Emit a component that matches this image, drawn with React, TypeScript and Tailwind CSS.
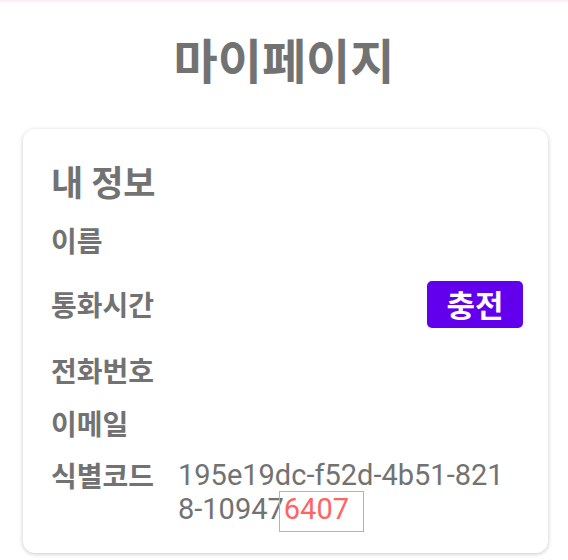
const KR = "font-['Noto_Sans_CJK_KR','Noto_Sans',sans-serif]";
const VAL = "font-['Roboto','Noto_Sans_CJK_KR',sans-serif]";

function Row({
  label,
  children,
  className = "",
}: {
  label: string;
  children?: React.ReactNode;
  className?: string;
}) {
  return (
    <div className={`flex h-[48px] items-center ${className}`}>
      <span className={`w-[127px] shrink-0 text-[28px] font-bold leading-none text-[#727272] ${KR}`}>
        {label}
      </span>
      <div className="flex flex-1 items-center">{children}</div>
    </div>
  );
}

export default function App() {
  return (
    <div className="min-h-[560px] w-[568px] bg-white">
      {/* faint app-bar edge */}
      <div className="h-[3px] bg-gradient-to-b from-[#f9e8f6] to-white" />

      <h1
        className={`pt-[25px] text-center text-[48px] font-bold leading-[60px] text-[#727272] ${KR}`}
      >
        마이페이지
      </h1>

      <div className="ml-[23px] mr-[20px] mt-[41px] rounded-[12px] bg-white pb-[27px] pl-[28px] pr-[25px] pt-[30px] shadow-[0_1px_4px_rgba(0,0,0,0.22)]">
        <h2 className={`text-[35px] font-bold leading-[44px] text-[#727272] ${KR}`}>
          내 정보
        </h2>

        <Row label="이름" className="mt-[13px]" />

        <Row label="통화시간" className="mt-[16px]">
          <span className="flex-1" />
          <button
            className={`flex h-[47px] w-[96px] items-center justify-center rounded-[5px] bg-[#6200ee] text-[31px] font-bold text-white ${KR}`}
          >
            충전
          </button>
        </Row>

        <Row label="전화번호" className="mt-[18px]" />

        <Row label="이메일" className="mt-[5px]" />

        <div className="mt-[11px] flex items-start">
          <span
            className={`w-[127px] shrink-0 text-[28px] font-bold leading-[34px] text-[#727272] ${KR}`}
          >
            식별코드
          </span>
          <div className={`text-[29px] leading-[34px] text-[#727272] ${VAL}`}>
            <span className="block">195e19dc-f52d-4b51-821</span>
            <span className="block">
              8-10947
              <span className="relative text-[#ff6464]">
                6407
                <span className="absolute -bottom-[6px] -left-[5px] -right-[15px] -top-[1px] border border-[#00ffff]" />
              </span>
            </span>
          </div>
        </div>
      </div>
    </div>
  );
}
